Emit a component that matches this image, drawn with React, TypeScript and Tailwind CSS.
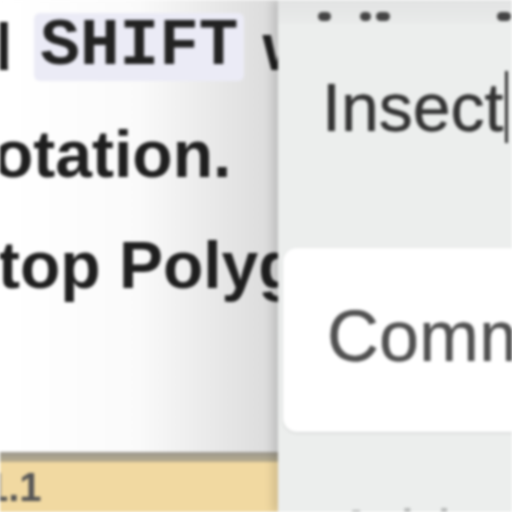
export default function App() {
  return (
    <div className="h-[512px] w-[512px] overflow-hidden bg-white blur-[1.4px]">
      <div className="flex h-full w-full">
        {/* left: document text */}
        <div className="flex w-[278px] shrink-0 flex-col overflow-hidden bg-gradient-to-r from-white via-[#fafafa] to-[#dadada] font-['Liberation_Sans',Arial,sans-serif] text-[66px] font-bold leading-[114px] text-[#1e1e1e]">
          <div className="mt-[-10px] flex items-center whitespace-nowrap">
            <span className="ml-[-28px]">d</span>
            <span className="ml-[22px] rounded-[6px] bg-[#ebebf6] px-[6px] font-['Liberation_Mono','Courier_New',monospace] leading-[68px] text-[#222]">
              SHIFT
            </span>
            <span className="ml-[18px]">w</span>
          </div>
          <div className="ml-[-7px] mt-[-7px] whitespace-nowrap">otation.</div>
          <div className="ml-[-2px] mt-[-3px] whitespace-nowrap">top Polygon</div>
          <div className="flex-1" />
          <div className="h-[10px] bg-gradient-to-b from-[#9a968c] to-[#b8ad8e]" />
          <div className="flex h-[50px] items-center bg-[#f1d9a1] font-['Liberation_Sans',Arial,sans-serif] text-[40px] font-bold text-[#555]">
            <span className="ml-[-14px]">1.1</span>
          </div>
        </div>

        {/* right: dropdown panel */}
        <div className="flex flex-1 flex-col bg-[#eceeed] shadow-[-6px_0_8px_rgba(0,0,0,0.12)] font-['Liberation_Sans',Arial,sans-serif]">
          <div className="flex h-[24px] items-center bg-gradient-to-b from-[#e2e3e3] to-[#e9ebea] pl-[40px] pt-[8px]">
            <span className="h-[9px] w-[13px] rounded-full bg-[#444]" />
            <span className="ml-[29px] h-[9px] w-[11px] rounded-full bg-[#444]" />
            <span className="ml-[5px] h-[9px] w-[14px] rounded-full bg-[#444]" />
            <span className="ml-[107px] h-[9px] w-[14px] rounded-full bg-[#444]" />
          </div>
          <div className="flex h-[224px] items-center pl-[44px]">
            <span className="mt-[-58px] whitespace-nowrap text-[68px] leading-none text-[#333] [text-shadow:0_0_1px_#333]">
              Insect
            </span>
            <span className="mt-[-58px] ml-[2px] h-[72px] w-[3px] bg-[#333]" />
          </div>
          <div className="ml-[5px] flex h-[184px] items-center rounded-l-[14px] bg-white pl-[44px] shadow-[0_1px_3px_rgba(0,0,0,0.12)]">
            <span className="mt-[-8px] whitespace-nowrap text-[72px] leading-none text-[#505050] [text-shadow:0_0_1px_#555]">
              Community
            </span>
          </div>
          <div className="flex-1 overflow-hidden pl-[56px] pt-[68px]">
            <span className="whitespace-nowrap text-[66px] leading-none text-[#b5b7b6]">
              Add tag
            </span>
          </div>
        </div>
      </div>
    </div>
  );
}
